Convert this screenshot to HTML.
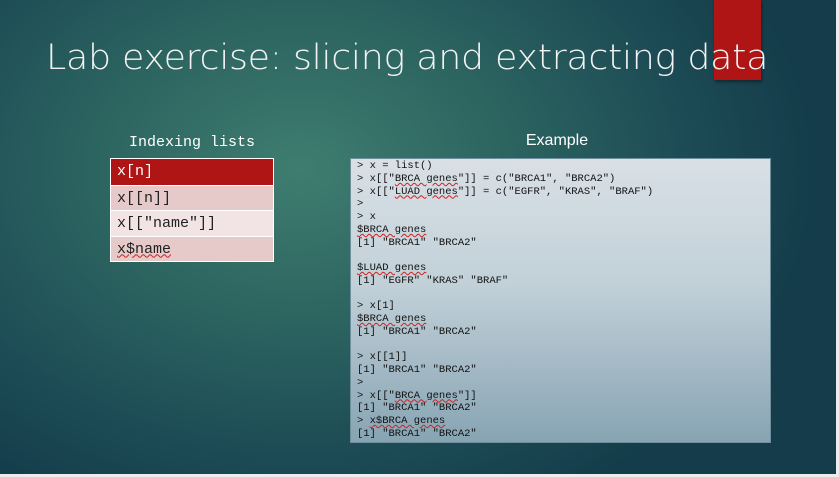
<!DOCTYPE html>
<html><head><style>
html,body{margin:0;padding:0;width:839px;height:477px;overflow:hidden;background:#ececec}
#s{position:absolute;left:0;top:0;width:836px;height:474px;overflow:hidden;
background:radial-gradient(ellipse 520px 380px at 300px 170px,#3f7d70 0%,#2c6460 40%,#1c4b55 75%,#143c4a 100%)}
#bar{position:absolute;left:714px;top:0;width:47px;height:80px;background:#b01515;box-shadow:1px 2px 3px rgba(0,0,0,.4)}
#t{position:absolute;left:46px;top:38px;font:35px "DejaVu Sans","Liberation Sans",sans-serif;font-weight:200;color:#f2f2f2;letter-spacing:-0.3px;white-space:nowrap;transform:scaleX(1.04);transform-origin:left}
.mono{font-family:"Liberation Mono","Courier New",monospace}
#ih{position:absolute;left:110px;width:164px;top:134px;text-align:center;color:#fff;font-size:15px}
#ex{position:absolute;left:497px;width:120px;top:132px;text-align:center;color:#fff;font:16px "Liberation Sans",sans-serif}
#tb{position:absolute;left:110px;top:158px;width:164px;border:1px solid #fff;box-sizing:border-box}
#tb div{height:25.5px;line-height:25px;padding-left:6px;font-size:15px;color:#222;border-top:1px solid #fff;box-sizing:border-box}
#tb div:first-child{border-top:none;background:#b01515;color:#fff}
.a{background:#e6c9c9}.b{background:#f2e4e4}
#code{position:absolute;left:350px;top:158px;width:421px;height:285px;background:linear-gradient(#d9e0e6,#c1d0d8 45%,#87a4b3);border:1px solid #6f8f9c;box-sizing:border-box;padding:1px 0 0 6px;font-size:10.5px;line-height:12.75px;color:#111;white-space:pre}
.u{text-decoration:underline wavy #d02020;text-decoration-thickness:1px}
</style></head><body>
<div id="s">
<div id="bar"></div>
<div id="t">Lab exercise: slicing and extracting data</div>
<div id="ih" class="mono">Indexing lists</div>
<div id="ex">Example</div>
<div id="tb" class="mono"><div>x[n]</div><div class="a">x[[n]]</div><div class="b">x[["name"]]</div><div class="a"><span class="u">x$name</span></div></div>
<div id="code" class="mono">&gt; x = list()
&gt; x[["<span class="u">BRCA genes</span>"]] = c("BRCA1", "BRCA2")
&gt; x[["<span class="u">LUAD genes</span>"]] = c("EGFR", "KRAS", "BRAF")
&gt;
&gt; x
<span class="u">$BRCA genes</span>
[1] "BRCA1" "BRCA2"

<span class="u">$LUAD genes</span>
[1] "EGFR" "KRAS" "BRAF"

&gt; x[1]
<span class="u">$BRCA genes</span>
[1] "BRCA1" "BRCA2"

&gt; x[[1]]
[1] "BRCA1" "BRCA2"
&gt;
&gt; x[["<span class="u">BRCA genes</span>"]]
[1] "BRCA1" "BRCA2"
&gt; <span class="u">x$BRCA genes</span>
[1] "BRCA1" "BRCA2"</div>
</div>
</body></html>
